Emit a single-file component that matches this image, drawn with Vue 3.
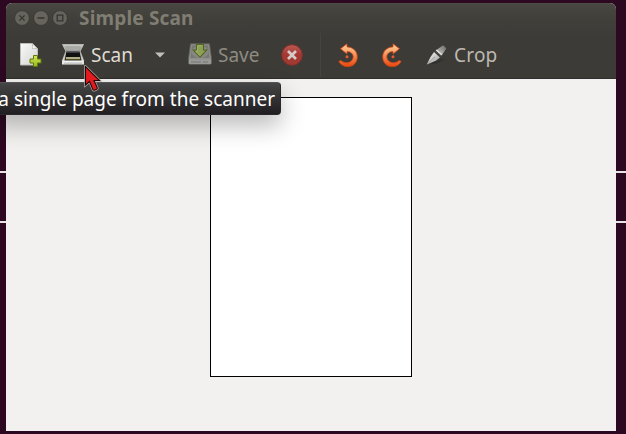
<script setup>
const title = 'Simple Scan'
const tooltip = 'a single page from the scanner'
</script>

<template>
  <div class="desktop">
    <div class="rule first"></div>
    <div class="rule second"></div>
    <main class="window">
      <header class="chrome">
        <div class="titlebar">
          <div class="controls">
            <svg class="control" viewBox="0 0 16 16"><circle cx="8" cy="8" r="7.4" /><path d="M5.4 5.4l5.2 5.2M10.6 5.4l-5.2 5.2" /></svg>
            <svg class="control" viewBox="0 0 16 16"><circle cx="8" cy="8" r="7.4" /><path d="M4.5 8h7" /></svg>
            <svg class="control" viewBox="0 0 16 16"><circle cx="8" cy="8" r="7.4" /><path d="M5.2 5.2h5.6v5.6H5.2z" /></svg>
          </div>
          <h1>{{ title }}</h1>
        </div>
        <nav class="toolbar">
          <button class="new" aria-label="New">
            <svg width="24" height="26" viewBox="0 0 24 26">
              <defs>
                <linearGradient id="paper" x2="1" y2="1"><stop stop-color="#fafafa" /><stop offset="1" stop-color="#d3d3d0" /></linearGradient>
                <linearGradient id="plus" x2="0" y2="1"><stop stop-color="#d5e45a" /><stop offset="1" stop-color="#96b81c" /></linearGradient>
              </defs>
              <path d="M1.500 1.500h12l5 5v16.500h-17z" fill="url(#paper)" stroke="#bcbcb8" />
              <path d="M13 1.500c1 2 .7 3.500.3 5 2-.4 3.600-.2 5 .3z" fill="#fff" stroke="#aaa" stroke-width=".7" />
              <path d="M14.500 13.500h4v3.500H22v4h-3.500v3.500h-4V21H11v-4h3.500z" fill="url(#plus)" stroke="#5c7909" />
            </svg>
          </button>
          <button class="scan">
            <svg width="24" height="24" viewBox="0 0 24 24">
              <defs>
                <linearGradient id="lid" x2="0" y2="1"><stop stop-color="#d0d0cd" /><stop offset="1" stop-color="#8b8b88" /></linearGradient>
                <linearGradient id="body" x2="0" y2="1"><stop stop-color="#a5a5a1" /><stop offset="1" stop-color="#ededeb" /></linearGradient>
              </defs>
              <path d="M1.500 1.500h21L19 8.500H5z" fill="url(#lid)" stroke="#c1c1bd" stroke-width=".8" />
              <path d="M4 3h16l-2.200 4.500H6.200z" fill="#a9a9a5" />
              <path d="M4.500 8h15l3.500 9.500v4H1v-4z" fill="url(#body)" />
              <path d="M5.500 8.500h13l2 9h-17z" fill="#111" />
              <path d="M6 9.200h12" stroke="#55555d" />
              <path d="M4.800 15h14.400" stroke="#e8e3b1" stroke-width="1.300" />
              <path d="M4.300 16.700h15.400" stroke="#70702e" stroke-width=".8" />
              <path d="M2 18.300h20" stroke="#fafaf9" />
              <path d="M3 20.200h18" stroke="#adada9" stroke-width=".8" />
            </svg>
            <span>Scan</span>
          </button>
          <button class="more" aria-label="Scan options">
            <svg width="10" height="6" viewBox="0 0 10 6"><path d="M0 .5h10L5 5.500z" fill="#c3bfb8" /></svg>
          </button>
          <button class="save">
            <svg width="24" height="24" viewBox="0 0 24 24">
              <defs><linearGradient id="disk" x2="0" y2="1"><stop stop-color="#777874" /><stop offset="1" stop-color="#92938f" /></linearGradient></defs>
              <path d="M2.500 .700h19l2 15v4q0 1.500-1.500 1.500H2q-1.500 0-1.500-1.500v-4z" fill="url(#disk)" stroke="#62635f" stroke-width=".7" />
              <path d="M3.500 2h17l1.500 13.500H2z" fill="#777874" stroke="#9b9c98" stroke-width=".6" />
              <ellipse cx="12" cy="9" rx="8.500" ry="6" fill="#888985" />
              <path d="M1 16.500h22v3q0 1.500-1 1.500H2q-1 0-1-1.500z" fill="#999a96" />
              <path d="M3 19h10M15 19h5" stroke="#747571" />
              <path d="M8.500 1.500h7V7h3.300L12 14.300 5.200 7h3.300z" fill="#8d9f52" stroke="#50651f" stroke-width="1.100" />
              <path d="M14.300 2.700H9.700v5.500H8l4 4.300" fill="none" stroke="#b4bd83" stroke-width=".6" />
            </svg>
            <span>Save</span>
          </button>
          <button class="stop" aria-label="Stop">
            <svg width="22" height="22" viewBox="0 0 22 22">
              <defs><linearGradient id="stop" x2="0" y2="1"><stop stop-color="#b95a52" /><stop offset=".5" stop-color="#a53733" /><stop offset="1" stop-color="#9d3b31" /></linearGradient></defs>
              <circle cx="11" cy="11" r="10.300" fill="url(#stop)" stroke="#8b2f29" />
              <path d="M7 7l8 8M15 7l-8 8" stroke="#d6cbc6" stroke-width="2.700" />
            </svg>
          </button>
          <i class="separator"></i>
          <button v-for="side in ['left', 'right']" :key="side" :class="['rotate', side]" :aria-label="`Rotate ${side}`">
            <svg width="20" height="25" viewBox="0 0 20 25">
              <defs><linearGradient :id="`turn-${side}`" x2="0" y2="1"><stop stop-color="#ffd09b" /><stop offset=".45" stop-color="#f9965f" /><stop offset="1" stop-color="#e9450d" /></linearGradient></defs>
              <path d="M2.500 5.700L9 .8v3.100c6 .1 10.300 4.200 10.300 10 0 5.700-4.100 9.800-9.500 9.800-4.200 0-7.300-2.200-9-5.300l2.100-.9c3.500 2.800 7.200 2.900 9.900.8 2.900-2.300 3.200-6.200.5-8.400C12.200 8.900 10.600 8.600 9 8.700v2.400z" :fill="`url(#turn-${side})`" stroke="#c94715" stroke-width=".8" />
              <circle cx="9" cy="13.800" r="1.500" fill="#e65b29" />
            </svg>
          </button>
          <button class="crop">
            <svg width="22" height="22" viewBox="0 0 22 22">
              <defs>
                <linearGradient id="blade" x2="1" y2="1"><stop stop-color="#fff" /><stop offset="1" stop-color="#969692" /></linearGradient>
                <linearGradient id="handle" x1="0" y1="1" x2="1" y2="0"><stop stop-color="#d8d8d5" /><stop offset="1" stop-color="#62625e" /></linearGradient>
              </defs>
              <path d="M4 20l9-4 6-1-3 2-7 3z" fill="#2c2c28" opacity=".6" />
              <path d="M10.500 6L17 1.300q2 1.200 3.300 3.200L16 11z" fill="url(#handle)" />
              <path d="M12.500 7.300L18.500 3" stroke="#8b8b87" stroke-width=".8" />
              <path d="M8 8l6 5.500-4 3L.8 20.500 4.500 13z" fill="url(#blade)" />
              <path d="M9 6.600l6.200 5.700" stroke="#666662" stroke-width=".8" />
              <path d="M10.300 6l5.500 5" stroke="#f0f0ee" stroke-width="1.200" />
              <path d="M1.500 19.800l7.500-7" stroke="#8a8a86" stroke-width=".8" />
            </svg>
            <span>Crop</span>
          </button>
        </nav>
      </header>
      <section class="workspace"><div class="page"></div></section>
    </main>
    <div class="tooltip" role="tooltip"><span>{{ tooltip }}</span></div>
    <svg class="cursor" width="18" height="28" viewBox="0 0 18 28">
      <path d="M1.500 1.500v18.500l4-3.500 3.400 8q.6 1.200 2 .6l1.700-.8q1.100-.6.600-1.800L10 15.500h5.500z" fill="#e31b1f" stroke="#b9b3ae" stroke-width="2.400" />
      <path d="M1.500 1.500v18.500l4-3.500 3.400 8q.6 1.200 2 .6l1.700-.8q1.100-.6.600-1.800L10 15.500h5.500z" fill="#e31b1f" stroke="#240708" stroke-width="1.100" />
    </svg>
  </div>
</template>

<style>
body { margin: 0; overflow: hidden; }
</style>

<style scoped>
.desktop { position: relative; box-sizing: border-box; width: 626px; height: 434px; padding: 3px 10px 3px 6px; overflow: hidden; background: #2c0920; font-family: "Noto Sans", "Open Sans", sans-serif; }
.rule { position: absolute; left: 0; width: 100%; height: 2px; background: #e8e4e6; }
.first { top: 171px; }
.second { top: 221px; }
.window { position: relative; display: flex; flex-direction: column; height: 428px; border-radius: 6px 6px 0 0; overflow: hidden; background: #f2f1ef; }
.chrome { box-sizing: border-box; height: 76px; flex: none; background: linear-gradient(#484741 0, #403f3a 16px, #3c3b37 35px, #3c3b36 100%); border-top: 1px solid #4d4c46; border-bottom: 1px solid #2e2d29; }
.titlebar { display: flex; align-items: center; height: 28px; padding-left: 7.500px; }
.controls { display: flex; gap: 3px; }
.control { width: 16px; height: 16px; fill: #66645d; stroke: #34332f; stroke-width: 1.300; }
.control circle { stroke-width: .7; }
.control path { fill: none; }
h1 { margin: 0 0 0 11.500px; font-size: 19px; line-height: 28px; font-weight: 700; letter-spacing: .18px; color: #807d73; white-space: nowrap; }
.toolbar { display: flex; align-items: center; height: 46px; padding-left: 13px; }
button { display: flex; align-items: center; padding: 0; border: 0; background: none; color: #dfdbd2; font: 19px/24px "Noto Sans", "Open Sans", sans-serif; white-space: nowrap; }
svg { display: block; flex: none; }
.new { width: 42px; }
.scan { width: 94px; gap: 6px; }
.more { width: 33px; }
.save { width: 93px; gap: 6px; color: #8e8b83; }
.stop { width: 39px; }
.separator { width: 1px; height: 44px; margin-right: 17px; background: #45443f; }
.rotate { width: 44px; }
.right svg { transform: scaleX(-1); }
.crop { gap: 6px; color: #bdb9b0; letter-spacing: .2px; }
.workspace { display: flex; justify-content: center; padding-top: 18px; }
.page { box-sizing: border-box; width: 202px; height: 280px; border: 1px solid #000; background: #fff; }
.tooltip { position: absolute; left: -10px; top: 82px; box-sizing: border-box; display: flex; justify-content: flex-end; width: 291px; height: 33px; padding-right: 5px; border: 1px solid #292729; border-top-color: #555; border-radius: 4px; background: linear-gradient(#454545, #211e21); box-shadow: 0 11px 24px rgba(0, 0, 0, .27); color: #fff; font-size: 19px; line-height: 32px; white-space: nowrap; }
.cursor { position: absolute; left: 84px; top: 65px; }
</style>
